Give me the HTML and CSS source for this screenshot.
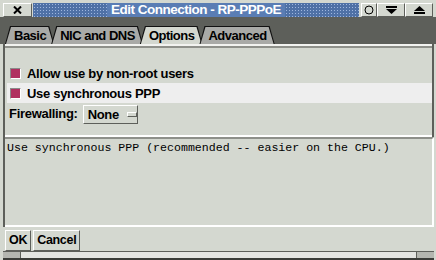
FILE: index.html
```html
<html>
<head>
	<link rel="stylesheet" href="styles.css">
</head>
<body>
	<div class="window">
		<div class="titlebar">
			<div class="tb_btn close">
				<svg width="9" height="8" viewBox="0 0 9 8"><path d="M1 0.5 L8 7.5 M8 0.5 L1 7.5" stroke="#000" stroke-width="2"/></svg>
			</div>
			<div class="title_fill"><span class="title">Edit Connection - RP-PPPoE</span></div>
			<div class="tb_btn small">
				<svg width="10" height="10" viewBox="0 0 10 10"><circle cx="5" cy="5" r="4" fill="none" stroke="#000" stroke-width="1"/></svg>
			</div>
			<div class="tb_btn wide">
				<svg width="11" height="8" viewBox="0 0 11 8"><rect x="0" y="0" width="11" height="2"/><path d="M0 3 H11 L5.5 8 Z"/></svg>
			</div>
			<div class="tb_btn wide">
				<svg width="11" height="8" viewBox="0 0 11 8"><path d="M5.5 0 L11 5 H0 Z"/><rect x="0" y="6" width="11" height="2"/></svg>
			</div>
		</div>
		<div class="tabstrip">
			<div class="tab"><div class="tab_face">Basic</div></div>
			<div class="tab"><div class="tab_face">NIC and DNS</div></div>
			<div class="tab"><div class="tab_face active">Options</div></div>
			<div class="tab"><div class="tab_face">Advanced</div></div>
		</div>
		<div class="pane">
			<div class="options">
				<div class="row"><span class="check"></span>Allow use by non-root users</div>
				<div class="row hilite"><span class="check"></span>Use synchronous PPP</div>
				<div class="row"><span class="label">Firewalling:</span><span class="optmenu">None<i class="indicator"></i></span></div>
			</div>
			<div class="help">Use synchronous PPP (recommended -- easier on the CPU.)</div>
		</div>
		<div class="buttons">
			<div class="button">OK</div>
			<div class="button">Cancel</div>
		</div>
		<div class="status">
			<span class="grip"></span>
			<span class="status_fill"></span>
			<span class="grip right"></span>
		</div>
	</div>
</body>
</html>
```

FILE: styles.css
```css
body
{
	margin: 0;
	background-color: #d4d8d0;
	font-family: "Liberation Sans", Arial, sans-serif;
	font-weight: bold;
	color: black;
}
.window
{
	width: 436px;
	height: 260px;
	overflow: hidden;
	display: flex;
	flex-direction: column;
}
.titlebar
{
	display: flex;
	height: 14px;
	padding: 3px 3px 0 3px;
	background-color: #d4d8d0;
}
.tb_btn
{
	box-sizing: border-box;
	height: 14px;
	display: flex;
	align-items: center;
	justify-content: center;
	background-color: #d4d8d0;
	border: 1px solid;
	border-color: #ffffff #5d5f5a #5d5f5a #ffffff;
}
.close
{
	width: 29px;
}
.small
{
	width: 16px;
	margin-left: 2px;
}
.wide
{
	width: 28px;
}
.title_fill
{
	flex: 1;
	margin-left: 1px;
	display: flex;
	justify-content: center;
	align-items: center;
	background-color: #4f71a6;
	background-image: radial-gradient(circle, #9fb6de 0.7px, transparent 1px);
	background-size: 3px 3px;
}
.title
{
	background-color: #5a7db4;
	color: white;
	font-size: 13.5px;
	letter-spacing: -0.5px;
	line-height: 14px;
	padding: 0 4px;
}
.tabstrip
{
	display: flex;
	height: 18px;
	padding: 9px 0 0 5px;
	background-color: #5d5f5a;
}
.tab
{
	height: 18px;
	margin-right: -3px;
	padding: 1px 1px 0 1px;
	box-sizing: border-box;
	background-color: #111;
	clip-path: polygon(0 100%, 5px 0, calc(100% - 5px) 0, 100% 100%);
}
.tab_face
{
	height: 17px;
	line-height: 17px;
	padding: 0 7px 0 8px;
	font-size: 13px;
	letter-spacing: -0.5px;
	background-color: #a9aaa7;
	clip-path: polygon(0 100%, 5px 0, calc(100% - 5px) 0, 100% 100%);
}
.tab_face.active
{
	background-color: #d4d8d0;
}
.pane
{
	margin: 0 2px 0 3px;
	height: 184px;
	display: flex;
	flex-direction: column;
	border-left: 2px solid #5d5f5a;
	border-right: 2px solid #5d5f5a;
}
.options
{
	height: 93px;
	box-sizing: border-box;
	padding: 17px 0 0 2px;
	border-top: 2px solid #f2f3f0;
	box-shadow: inset 0 2px 0 #8e908a;
	border-bottom: 2px solid #ffffff;
}
.row
{
	display: flex;
	align-items: center;
	height: 20px;
	padding-left: 3px;
	font-size: 13px;
	letter-spacing: -0.3px;
}
.hilite
{
	background-color: #eeeeee;
}
.check
{
	width: 9px;
	height: 9px;
	margin-right: 6px;
	background-color: #b03060;
	border: 1px solid;
	border-color: #8a8a8a #ffffff #ffffff #8a8a8a;
}
.label
{
	margin-left: -1px;
	margin-right: 5px;
}
.optmenu
{
	display: flex;
	align-items: center;
	height: 17px;
	width: 49px;
	padding-left: 4px;
	margin-top: 2px;
	border: 1px solid;
	border-color: #ffffff #5d5f5a #5d5f5a #ffffff;
}
.indicator
{
	width: 10px;
	height: 3px;
	margin-left: 8px;
	background-color: #d4d8d0;
	border: 1px solid;
	border-color: #ffffff #5d5f5a #5d5f5a #ffffff;
}
.help
{
	flex: 1;
	padding: 2px 0 0 2px;
	border-top: 2px solid #8e908a;
	border-bottom: 2px solid #ffffff;
	border-right: 2px solid #ffffff;
	margin-right: -2px;
	font-family: "Liberation Mono", "Courier New", monospace;
	font-weight: normal;
	font-size: 11.6px;
	line-height: 14px;
}
.buttons
{
	display: flex;
	gap: 2px;
	height: 21px;
	padding: 3px 0 0 5px;
}
.button
{
	height: 21px;
	box-sizing: border-box;
	padding: 0 3px;
	line-height: 19px;
	font-size: 12.5px;
	letter-spacing: -0.3px;
	border: 1px solid;
	border-color: #ffffff #5d5f5a #5d5f5a #ffffff;
}
.status
{
	display: flex;
	height: 6px;
	margin: 0 2px 0 3px;
	border-top: 1px solid #5d5f5a;
	border-bottom: 2px solid #3a3c38;
}
.grip
{
	width: 17px;
	background-color: #b4b6b0;
	border-right: 1px solid #5d5f5a;
}
.grip.right
{
	border-right: none;
	border-left: 1px solid #5d5f5a;
}
.status_fill
{
	flex: 1;
	background-color: #e4e5e2;
}
```
